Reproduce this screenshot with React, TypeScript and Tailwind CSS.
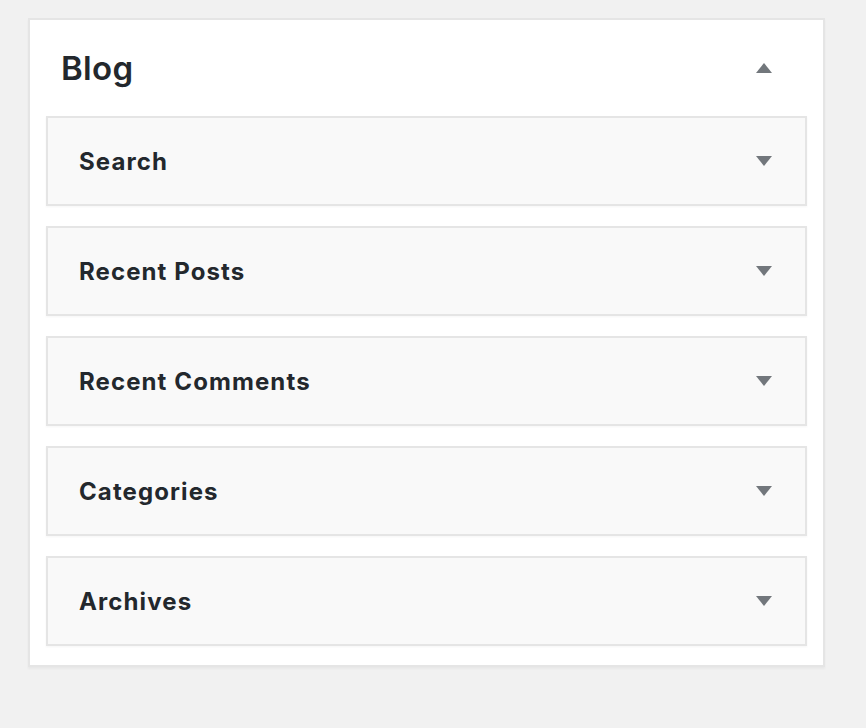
import { useState } from "react";

const widgets = ["Search", "Recent Posts", "Recent Comments", "Categories", "Archives"];

function Arrow({ up = false }: { up?: boolean }) {
  return (
    <svg width="16" height="10" viewBox="0 0 16 10" className="block">
      {up ? <path d="M8 0 L16 10 L0 10 Z" fill="#72777c" /> : <path d="M0 0 L16 0 L8 10 Z" fill="#72777c" />}
    </svg>
  );
}

export default function App() {
  const [open, setOpen] = useState(true);

  return (
    <div className="min-h-[728px] w-full bg-[#f1f1f1] pl-[28px] pt-[18px] font-['Inter',sans-serif] text-[#23282d]">
      <div className="w-[797px] border-2 border-[#e5e5e5] bg-white pb-[19px] shadow-[0_2px_2px_rgba(0,0,0,0.04)]">
        {/* section header */}
        <button
          onClick={() => setOpen((o) => !o)}
          className="flex h-[96px] w-full items-center justify-between pl-[31px] pr-[51px] text-left"
        >
          <span className="text-[33px] font-semibold leading-none tracking-[0.3px]">Blog</span>
          <Arrow up={open} />
        </button>

        {open && (
          <div className="flex flex-col gap-[20px] px-[16px]">
            {widgets.map((w) => (
              <div
                key={w}
                className="flex h-[90px] items-center justify-between border-2 border-[#e5e5e5] bg-[#f9f9f9] pl-[31px] pr-[33px] shadow-[0_1px_2px_rgba(0,0,0,0.04)]"
              >
                <span className="pt-[2px] text-[24px] font-bold leading-none tracking-[1.1px]">{w}</span>
                <Arrow />
              </div>
            ))}
          </div>
        )}
      </div>
    </div>
  );
}
